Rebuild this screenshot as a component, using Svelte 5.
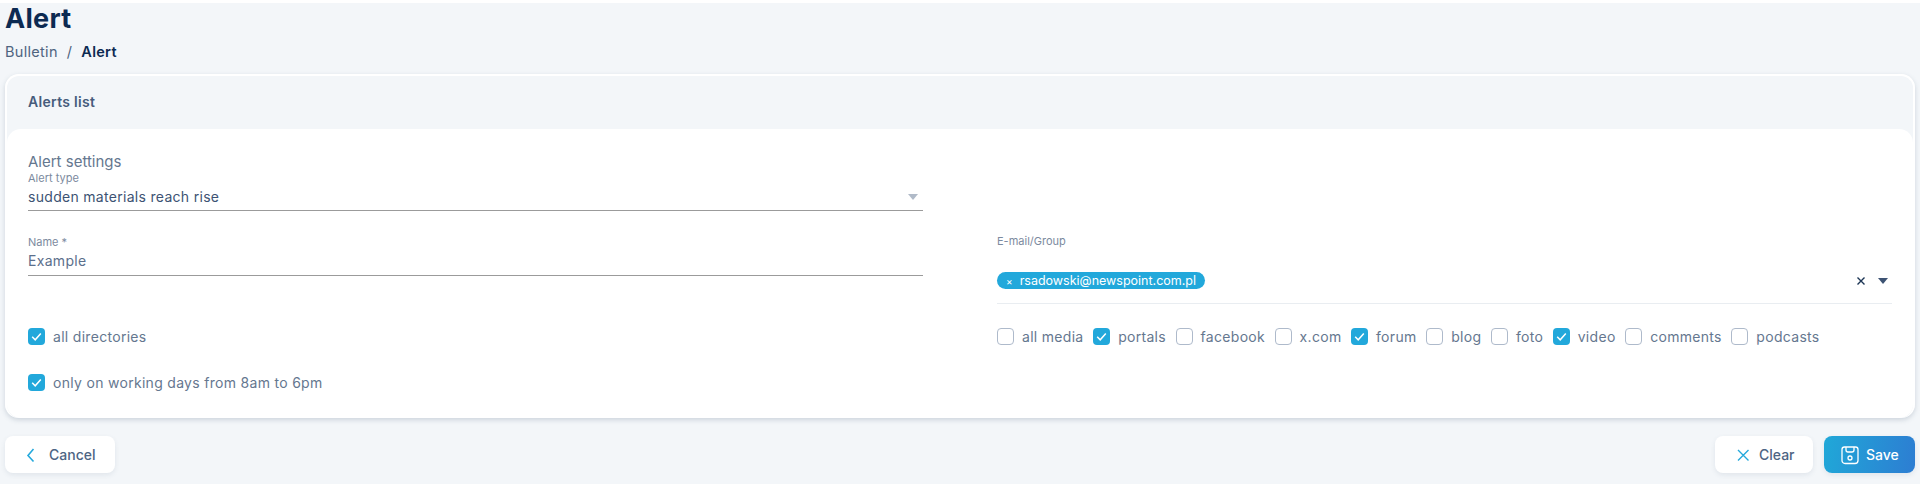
<script>
	const media = [
		{ name: 'all media', on: false },
		{ name: 'portals', on: true },
		{ name: 'facebook', on: false },
		{ name: 'x.com', on: false },
		{ name: 'forum', on: true },
		{ name: 'blog', on: false },
		{ name: 'foto', on: false },
		{ name: 'video', on: true },
		{ name: 'comments', on: false },
		{ name: 'podcasts', on: false }
	];
</script>

{#snippet check(label, on)}
	<label class="check">
		<span class="box" class:on>
			{#if on}
				<svg viewBox="0 0 17 17" width="17" height="17"><path d="M4.2 8.8l3 3 5.6-6.4" fill="none" stroke="#fff" stroke-width="1.5" /></svg>
			{/if}
		</span>
		<span>{label}</span>
	</label>
{/snippet}

<div class="page">
	<header>
		<h1>Alert</h1>
		<div class="crumbs"><span>Bulletin</span><span class="sep">/</span><b>Alert</b></div>
	</header>

	<section class="card">
		<div class="card-title">Alerts list</div>
		<div class="panel">
			<div class="panel-title">Alert settings</div>
			<div class="grid">
				<div class="col">
					<div class="field type">
						<small>Alert type</small>
						<div class="value dark">sudden materials reach rise<i class="arrow"></i></div>
					</div>
					<div class="field name">
						<small>Name *</small>
						<div class="value">Example</div>
					</div>
					<div class="checks-left">
						{@render check('all directories', true)}
						{@render check('only on working days from 8am to 6pm', true)}
					</div>
				</div>
				<div class="col">
					<div class="email">
						<small>E-mail/Group</small>
						<div class="chips">
							<span class="chip"><em>×</em>rsadowski@newspoint.com.pl</span>
							<span class="tools">
								<svg viewBox="0 0 10 10" width="10" height="10"><path d="M1.5 1.5l7 7M8.5 1.5l-7 7" stroke="#1c3554" stroke-width="1.4" /></svg>
								<i class="arrow navy"></i>
							</span>
						</div>
					</div>
					<div class="media">
						{#each media as m}
							{@render check(m.name, m.on)}
						{/each}
					</div>
				</div>
			</div>
		</div>
	</section>

	<footer>
		<button class="btn">
			<svg viewBox="0 0 12 16" width="12" height="16"><path d="M8.5 2L3 8.5 8.5 14.5" fill="none" stroke="#25a9dc" stroke-width="1.6" /></svg>
			Cancel
		</button>
		<div class="right">
			<button class="btn clear">
				<svg viewBox="0 0 14 14" width="14" height="14"><path d="M2 2l10.5 10.5M12.5 2L2 12.5" fill="none" stroke="#25a9dc" stroke-width="1.4" /></svg>
				Clear
			</button>
			<button class="btn save">
				<svg viewBox="0 0 20 20" width="20" height="20" fill="none" stroke="#fff" stroke-width="1.3">
					<path d="M4.5 2h11a2.500 2.500 0 0 1 2.500 2.500v11a3 3 0 0 1-3 3H5a3 3 0 0 1-3-3v-11A2.500 2.500 0 0 1 4.500 2z" />
					<path d="M6 2v3a2 2 0 0 0 2 2h4a2 2 0 0 0 2-2V2" />
					<circle cx="10" cy="13" r="2" />
				</svg>
				Save
			</button>
		</div>
	</footer>
</div>

<style>
	:global(body) {
		background: #fff;
		font-family: Inter, 'Open Sans', sans-serif;
		letter-spacing: 0.3px;
	}

	.page {
		height: 481px;
		margin: 3px 0;
		padding: 0 5px;
		background: #f3f6f9;
		color: #53688a;
	}

	header {
		height: 71px;
	}

	h1 {
		margin: 0;
		font-size: 27px;
		line-height: 32px;
		font-weight: 700;
		color: #0c2a52;
	}

	.crumbs {
		margin-top: 8px;
		display: flex;
		gap: 9px;
		font-size: 14.5px;
		line-height: 18px;
		color: #4f6480;
	}

	.crumbs b {
		font-weight: 600;
		color: #0c2a52;
	}

	.card {
		height: 342px;
		border: 2px solid #fff;
		border-bottom: 0;
		border-radius: 14px;
		box-shadow: 0 2px 5px rgba(70, 90, 120, 0.22);
	}

	.card-title {
		height: 53px;
		padding: 17px 0 0 21px;
		font-size: 14px;
		line-height: 18px;
		font-weight: 600;
		color: #465c7c;
		box-sizing: border-box;
	}

	.panel {
		height: 289px;
		box-sizing: border-box;
		padding: 24px 21px 0;
		background: #fff;
		border-radius: 14px;
	}

	.panel-title {
		margin-bottom: 1px;
		font-size: 15px;
		line-height: 18px;
		color: #65778f;
		letter-spacing: 0;
	}

	.grid {
		display: grid;
		grid-template-columns: 895px 895px;
		justify-content: space-between;
	}

	small {
		display: block;
		font-size: 11px;
		line-height: 13px;
		color: #7c8a9e;
		letter-spacing: 0;
	}

	.value {
		display: flex;
		justify-content: space-between;
		align-items: center;
		height: 23px;
		padding-bottom: 2px;
		border-bottom: 1.5px solid #9b9b9b;
		font-size: 14px;
		color: #5b6f8c;
	}

	.value.dark {
		color: #3d5373;
	}

	.field.name {
		margin-top: 25px;
	}

	.field.name .value {
		padding-bottom: 3px;
	}

	.arrow {
		width: 0;
		height: 0;
		margin-right: 5px;
		border: 5px solid transparent;
		border-top: 6px solid #b0bac8;
		border-bottom: 0;
	}

	.arrow.navy {
		border-top-color: #3d5373;
	}

	.checks-left {
		margin-top: 52px;
		display: flex;
		flex-direction: column;
		gap: 29px;
	}

	.check {
		display: flex;
		align-items: center;
		gap: 8px;
		height: 17px;
		font-size: 14px;
		color: #65778f;
	}

	.box {
		width: 17px;
		height: 17px;
		box-sizing: border-box;
		border: 1.5px solid #aebacb;
		border-radius: 4px;
	}

	.box.on {
		border: 0;
		background: #22a8db;
	}

	.box svg {
		display: block;
	}

	.email {
		margin-top: -19px;
	}

	.email small {
		padding-top: 82px;
	}

	.chips {
		margin-top: 24px;
		height: 31px;
		border-bottom: 1px solid #e9edf1;
		display: flex;
		justify-content: space-between;
		align-items: flex-start;
	}

	.chip {
		height: 17px;
		padding: 0 9px;
		display: flex;
		align-items: center;
		background: #22a8db;
		border-radius: 9px;
		color: #fff;
		font-size: 12.5px;
		letter-spacing: 0;
	}

	.chip em {
		font-style: normal;
		font-size: 10px;
		margin-right: 7px;
	}

	.tools {
		display: flex;
		align-items: center;
		gap: 12px;
		padding-top: 4px;
	}

	.tools .arrow {
		margin-right: 4px;
	}

	.media {
		margin-top: 24px;
		display: flex;
		gap: 9.6px;
	}

	footer {
		margin-top: 18px;
		display: flex;
		justify-content: space-between;
	}

	.right {
		display: flex;
		gap: 11px;
	}

	.btn {
		height: 37px;
		width: 110px;
		padding: 0 0 0 20px;
		display: flex;
		align-items: center;
		gap: 12px;
		border: 0;
		border-radius: 8px;
		background: #fff;
		font: inherit;
		font-size: 14px;
		font-weight: 500;
		color: #4d6483;
		box-shadow: 0 2px 5px rgba(70, 90, 120, 0.1);
	}

	.btn.clear {
		width: 98px;
		padding-left: 21px;
		gap: 9px;
	}

	.btn.save {
		width: 91px;
		padding-left: 16px;
		gap: 6px;
		color: #fff;
		background: linear-gradient(100deg, #20a8d8, #2d7dd2);
	}
</style>
